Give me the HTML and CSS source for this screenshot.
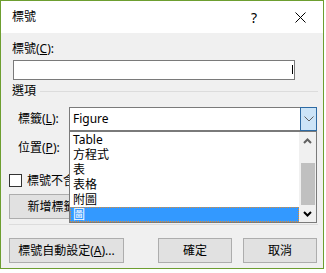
FILE: index.html
```html
<!DOCTYPE html>
<html>
	<head>
		<title>標號</title>
		<meta charset="utf-8">
		<link rel="stylesheet" href="styles.css">
	</head>
	<body>
		<div class="window">
			<div class="titlebar">
				<span class="title">標號</span>
				<span class="tb-btn help">?</span>
				<span class="tb-btn close">
					<svg width="11" height="11" viewBox="0 0 11 11"><path d="M0.5 0.5 L10.5 10.5 M10.5 0.5 L0.5 10.5" stroke="#000" stroke-width="1" fill="none"/></svg>
				</span>
			</div>

			<div class="content">
				<div class="field-label">標號(<u>C</u>):</div>
				<div class="textbox"><span class="caret"></span></div>

				<div class="group-head">
					<span>選項</span>
					<span class="rule"></span>
				</div>

				<div class="opt-row">
					<span class="opt-label">標籤(<u>L</u>):</span>
					<div class="combo open">
						<span class="combo-text">Figure</span>
						<span class="combo-btn">
							<svg width="10" height="6" viewBox="0 0 10 6"><path d="M0.5 0.5 L5 5 L9.5 0.5" stroke="#606060" stroke-width="1" fill="none"/></svg>
						</span>
						<div class="droplist">
							<ul class="items">
								<li>Table</li>
								<li>方程式</li>
								<li>表</li>
								<li>表格</li>
								<li>附圖</li>
								<li class="selected">圖</li>
							</ul>
							<div class="scrollbar">
								<span class="sb-arrow">
									<svg width="9" height="6" viewBox="0 0 9 6"><path d="M1 5 L4.5 1.5 L8 5" stroke="#606060" stroke-width="2" fill="none"/></svg>
								</span>
								<span class="sb-track"><span class="sb-thumb"></span></span>
								<span class="sb-arrow">
									<svg width="9" height="6" viewBox="0 0 9 6"><path d="M1 1 L4.5 4.5 L8 1" stroke="#000" stroke-width="2" fill="none"/></svg>
								</span>
							</div>
						</div>
					</div>
				</div>

				<div class="opt-row">
					<span class="opt-label">位置(<u>P</u>):</span>
					<div class="combo"></div>
				</div>

				<label class="check-row">
					<span class="checkbox"></span>
					<span class="check-text">標號不含標籤(<u>E</u>)</span>
				</label>

				<div class="btn-row">
					<button class="button wide">新增標籤(<u>N</u>)...</button>
				</div>

				<div class="separator"></div>

				<div class="footer">
					<button class="button auto">標號自動設定(<u>A</u>)...</button>
					<button class="button ok">確定</button>
					<button class="button">取消</button>
				</div>
			</div>
		</div>
	</body>
</html>
```

FILE: styles.css
```css
* {
	margin: 0;
	padding: 0;
	box-sizing: border-box;
}

html, body {
	background: #fff;
	font-family: "Noto Sans", "Noto Sans CJK TC", sans-serif;
	font-size: 12px;
	color: #000;
}

.window {
	width: 324px;
	height: 269px;
	border: 1px solid #6d9e30;
	background: #f0f0f0;
	overflow: hidden;
}

.titlebar {
	display: flex;
	align-items: center;
	height: 32px;
	background: #fff;
}

.title {
	flex: 1;
	padding-left: 11px;
	line-height: 16px;
}

.tb-btn {
	display: flex;
	align-items: center;
	justify-content: center;
	width: 46px;
	height: 32px;
}

.help {
	font-size: 14px;
	padding-top: 1px;
}

.content {
	padding: 0 6px 0 8px;
}

.field-label {
	margin-top: 8px;
	padding-left: 3px;
	line-height: 16px;
}

.textbox {
	position: relative;
	margin: 3px 0 0 4px;
	width: 282px;
	height: 20px;
	background: #fff;
	border: 1px solid #7a7a7a;
}

.caret {
	position: absolute;
	right: 1px;
	top: 4px;
	width: 1px;
	height: 9px;
	background: #000;
}

.group-head {
	display: flex;
	align-items: center;
	margin-top: 3px;
	padding-left: 3px;
	height: 16px;
	line-height: 16px;
}

.rule {
	flex: 1;
	height: 1px;
	margin: 0 -1px 0 4px;
	background: #dcdcdc;
}

.opt-row {
	display: flex;
	align-items: center;
	margin-top: 8px;
	height: 24px;
}

.opt-row + .opt-row {
	margin-top: 5px;
}

.opt-label {
	width: 60px;
	padding-left: 9px;
	line-height: 16px;
}

.combo {
	position: relative;
	display: flex;
	align-items: center;
	width: 248px;
	height: 24px;
	background: #fff;
	border: 1px solid #7a7a7a;
}

.combo-text {
	flex: 1;
	padding-left: 3px;
	line-height: 16px;
}

.combo-btn {
	display: flex;
	align-items: center;
	justify-content: center;
	width: 17px;
	height: 24px;
	margin: -1px -1px -1px 0;
	background: #cce4f7;
	border: 1px solid #2d6aa3;
}

.droplist {
	position: absolute;
	top: 23px;
	left: -1px;
	z-index: 5;
	display: flex;
	width: 248px;
	height: 92px;
	background: #fff;
	border: 1px solid #7a7a7a;
}

.items {
	flex: 1;
	list-style: none;
}

.items li {
	height: 15px;
	line-height: 15px;
	padding-left: 3px;
}

.items li.selected {
	background: #3399ff;
	color: #fff;
	outline: 1px dotted #e38b2c;
	outline-offset: -1px;
}

.scrollbar {
	display: flex;
	flex-direction: column;
	width: 17px;
	background: #f0f0f0;
}

.sb-arrow {
	display: flex;
	align-items: center;
	justify-content: center;
	height: 17px;
}

.sb-track {
	flex: 1;
	padding: 14px 1px 0 2px;
}

.sb-thumb {
	display: block;
	height: 42px;
	background: #c0c0c0;
}

.check-row {
	display: flex;
	align-items: center;
	margin-top: 14px;
	height: 13px;
	line-height: 16px;
}

.checkbox {
	flex: none;
	width: 13px;
	height: 13px;
	margin-right: 5px;
	background: #fff;
	border: 1px solid #333;
}

.check-text {
	white-space: nowrap;
}

.btn-row {
	display: flex;
	margin-top: 7px;
}

.button {
	height: 25px;
	padding: 0 6px;
	background: #e1e1e1;
	border: 1px solid #adadad;
	font-family: "Noto Sans", "Noto Sans CJK TC", sans-serif;
	font-size: 12px;
	line-height: 16px;
	color: #000;
	white-space: nowrap;
}

.btn-row .button.wide {
	flex: 0 0 111px;
}

.separator {
	margin: 5px -1px 0 0;
	height: 1px;
	background: #dcdcdc;
}

.footer {
	display: flex;
	gap: 11px;
	margin-top: 13px;
}

.footer .button {
	width: 74px;
}

.footer .button.auto {
	width: 115px;
}

.footer .button.ok {
	margin-left: auto;
}
```
